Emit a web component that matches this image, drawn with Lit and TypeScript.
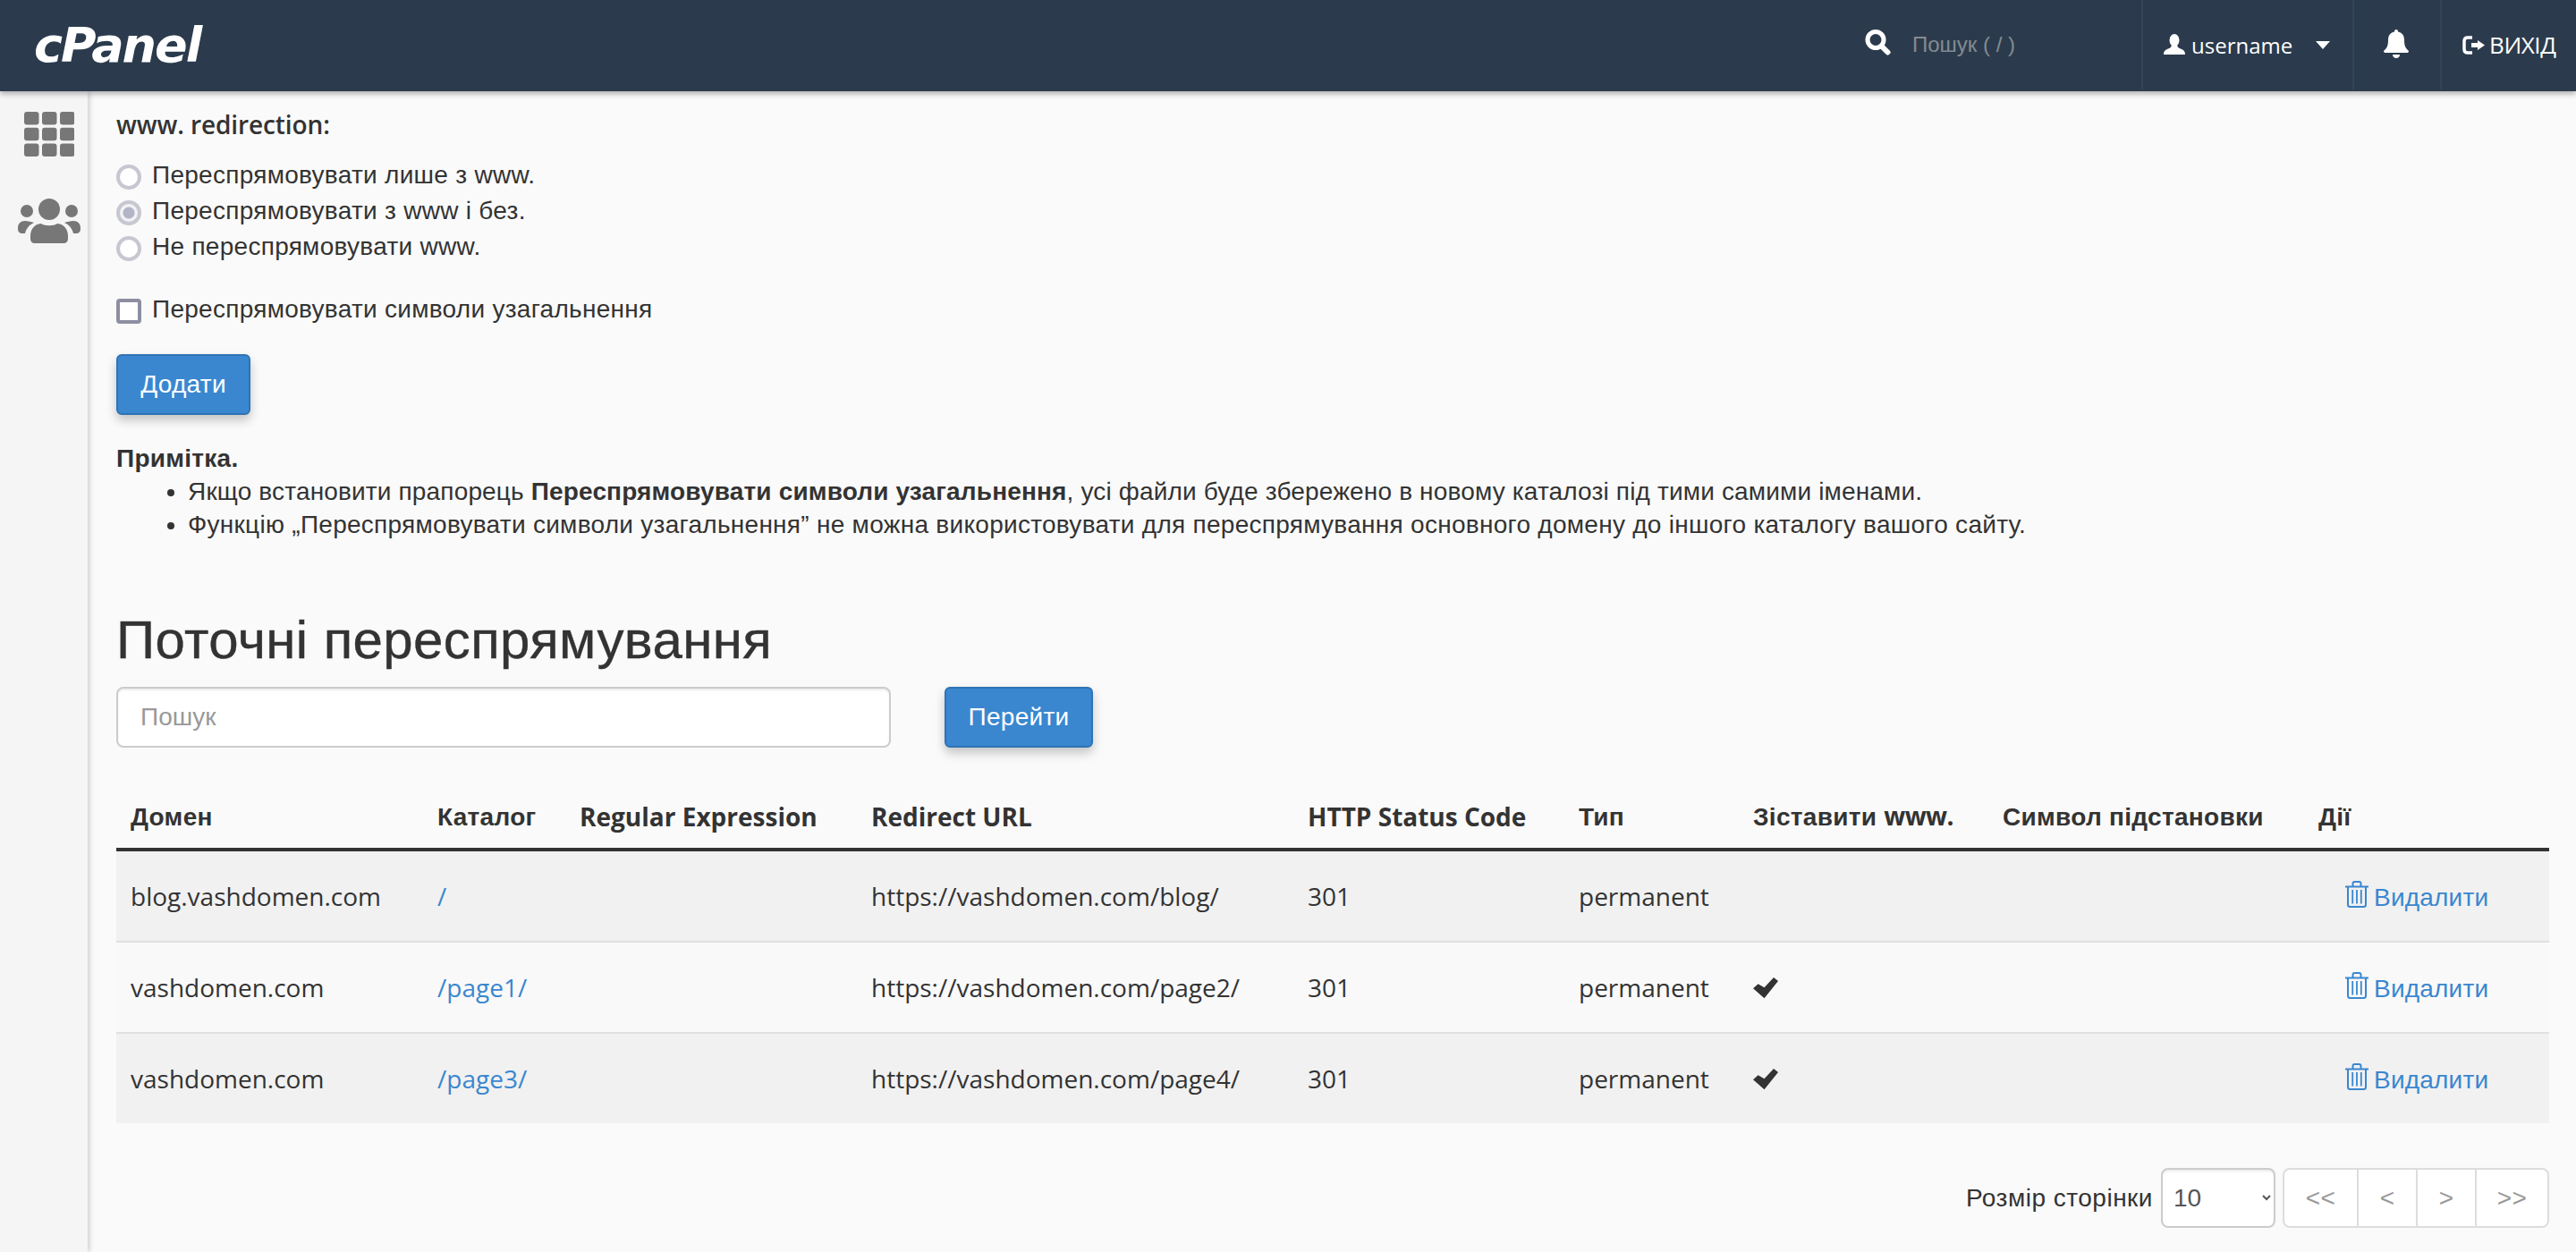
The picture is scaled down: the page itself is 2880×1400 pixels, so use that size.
import { LitElement, html, svg, css, nothing } from "lit";
import { customElement } from "lit/decorators.js";

const rows = [
  { domain: "blog.vashdomen.com", dir: "/", url: "https://vashdomen.com/blog/", www: false },
  { domain: "vashdomen.com", dir: "/page1/", url: "https://vashdomen.com/page2/", www: true },
  { domain: "vashdomen.com", dir: "/page3/", url: "https://vashdomen.com/page4/", www: true },
];

const trashIcon = html`<svg class="trash" viewBox="0 0 26 30" fill="none" stroke="currentColor" stroke-width="2">
  <path d="M0 6.5H26M8.5 6V3C8.5 1.800 9.300 1 10.500 1H15.500C16.700 1 17.500 1.800 17.500 3V6" />
  <path d="M3 7V26.500C3 28 4 29 5.500 29H20.500C22 29 23 28 23 26.500V7" />
  <path d="M8.200 10V25.500M13 10V25.500M17.800 10V25.500" stroke-width="1.800" />
</svg>`;

const checkIcon = html`<svg class="check" viewBox="0 0 28 24">
  <polygon points="0,12.300 5.600,7.300 12.500,11.300 23,0 28,4 12.500,23.300" fill="currentColor" />
</svg>`;

@customElement("app-root")
export class AppRoot extends LitElement {
  static styles = css`
    :host {
      display: block;
      height: 1400px;
      overflow: hidden;
      background: #fafafa;
      color: #333;
      font-family: "Liberation Sans", Arial, sans-serif;
      font-size: 28px;
      line-height: 37px;
      letter-spacing: 0.28px;
    }

    .topbar {
      position: relative;
      z-index: 2;
      display: flex;
      align-items: stretch;
      height: 102px;
      background: #2b3b4d;
      color: #fff;
      letter-spacing: 0;
      box-shadow: 0 3px 6px rgba(0, 0, 0, 0.3);
    }

    .logo {
      margin-left: 38px;
      align-self: center;
      font-family: "DejaVu Sans", sans-serif;
      font-size: 54px;
      font-weight: 700;
      font-style: italic;
      letter-spacing: -2px;
      line-height: 60px;
    }

    .spacer {
      flex: 1;
    }

    .search {
      display: flex;
      align-items: center;
      width: 311px;
      height: 100px;
    }

    .search svg {
      width: 32px;
      height: 30px;
      margin-top: -6px;
    }

    .search input {
      width: 240px;
      margin-left: 23px;
      padding: 0;
      border: 0;
      outline: 0;
      background: transparent;
      color: #fff;
      font: 24px "Liberation Sans", sans-serif;
    }

    .search input::placeholder {
      color: #858b91;
      opacity: 1;
    }

    .section {
      flex: none;
      display: flex;
      align-items: center;
      height: 100px;
      box-sizing: border-box;
      border-left: 2px solid #33445a;
    }

    .user {
      width: 236px;
      padding-left: 23px;
      font-family: "Open Sans", sans-serif;
      font-size: 24px;
    }

    .user svg {
      width: 24px;
      height: 23px;
      margin-right: 7px;
      margin-top: -2px;
    }

    .caret {
      margin-left: 26px;
      border-top: 9px solid #fff;
      border-left: 8px solid transparent;
      border-right: 8px solid transparent;
    }

    .bell {
      width: 98px;
      padding-left: 33px;
    }

    .bell svg {
      width: 28px;
      height: 32px;
      margin-top: -2px;
    }

    .logout {
      width: 152px;
      padding-left: 23px;
      font-family: "Open Sans", sans-serif;
      font-size: 26px;
      letter-spacing: -0.4px;
    }

    .logout svg {
      width: 25px;
      height: 21px;
      margin-right: 5px;
    }

    .body {
      display: flex;
      height: 1298px;
    }

    .sidebar {
      flex: none;
      display: flex;
      flex-direction: column;
      align-items: center;
      gap: 47px;
      box-sizing: border-box;
      width: 98px;
      padding: 23px 0 0 12px;
      background: #f5f5f5;
      box-shadow: 2px 0 6px rgba(0, 0, 0, 0.18);
    }

    .sidebar svg {
      display: block;
      flex: none;
      fill: #777;
    }

    .main {
      flex: 1;
      min-width: 0;
      padding: 17px 30px 0 32px;
    }

    .form-label {
      font-family: "Open Sans", sans-serif;
      font-weight: 600;
      line-height: 40px;
      letter-spacing: -0.1px;
    }

    .options {
      margin-top: 16px;
    }

    .option {
      display: flex;
      align-items: center;
      height: 40px;
    }

    .option input {
      appearance: none;
      flex: none;
      width: 28px;
      height: 28px;
      margin: 6px 12px 0 0;
      box-sizing: border-box;
      background: #fff;
      border: 4px solid #c6c7d1;
      border-radius: 50%;
    }

    .option input:checked {
      background: radial-gradient(circle, #b3b5c6 0 6px, #f2f2f5 7px);
    }

    .option input[type="checkbox"] {
      border-color: #8e8ea2;
      border-radius: 4px;
    }

    .wild {
      margin-top: 30px;
    }

    .btn {
      display: block;
      height: 68px;
      box-sizing: border-box;
      padding: 0;
      background: #3a87d0;
      border: 2px solid #2f73b5;
      border-radius: 6px;
      box-shadow: 0 6px 12px rgba(0, 0, 0, 0.22);
      color: #fff;
      font: 28px "Liberation Sans", sans-serif;
      letter-spacing: 0.28px;
    }

    .add {
      width: 150px;
      margin-top: 31px;
    }

    .note {
      margin-top: 30px;
    }

    .note ul {
      margin: 0;
      padding-left: 80px;
    }

    .note .tight {
      letter-spacing: 0.16px;
    }

    h2 {
      margin: 78px 0 0;
      font-size: 60px;
      font-weight: 400;
      line-height: 66px;
      letter-spacing: 0.4px;
      -webkit-text-stroke: 0.4px #333;
    }

    .filter {
      display: flex;
      gap: 60px;
      margin-top: 19px;
    }

    .filter input {
      width: 866px;
      height: 68px;
      box-sizing: border-box;
      padding: 0 25px;
      background: #fff;
      border: 2px solid #ccc;
      border-radius: 8px;
      box-shadow: inset 0 2px 2px rgba(0, 0, 0, 0.075);
      font: 28px "Liberation Sans", sans-serif;
    }

    .filter input::placeholder {
      color: #999;
      opacity: 1;
    }

    .go {
      width: 166px;
    }

    table {
      width: 2720px;
      margin-top: 42px;
      table-layout: fixed;
      border-collapse: separate;
      border-spacing: 0;
      font-family: "Open Sans", sans-serif;
      letter-spacing: 0;
    }

    .c1 { width: 343px; }
    .c2 { width: 159px; }
    .c3 { width: 326px; }
    .c4 { width: 488px; }
    .c5 { width: 303px; }
    .c6 { width: 195px; }
    .c7 { width: 279px; }
    .c8 { width: 353px; }
    .c9 { width: 274px; }

    th {
      height: 70px;
      padding: 0 16px;
      border-bottom: 4px solid #333;
      text-align: left;
      font-weight: 700;
      white-space: nowrap;
    }

    .cy {
      font-family: "Liberation Sans", sans-serif;
      letter-spacing: 0.3px;
    }

    .lat {
      font-family: "Open Sans", sans-serif;
      letter-spacing: -0.6px;
    }

    td {
      height: 100px;
      padding: 0 16px;
      border-bottom: 2px solid #e0e0e0;
      white-space: nowrap;
    }

    tr:nth-child(odd) td {
      background: #f1f1f1;
    }

    tr:nth-child(even) td {
      background: #f9f9f9;
    }

    tr:last-child td {
      border-bottom: 0;
    }

    a {
      color: #3a87d0;
      text-decoration: none;
    }

    .action {
      display: inline-flex;
      align-items: center;
      margin: 3px 0 0 30px;
      font-family: "Liberation Sans", sans-serif;
      letter-spacing: 0.2px;
    }

    .trash {
      width: 26px;
      height: 30px;
      margin: -7px 6px 0 0;
    }

    .check {
      display: block;
      width: 28px;
      height: 24px;
      margin-top: 1px;
      color: #333;
    }

    .pager {
      display: flex;
      justify-content: flex-end;
      align-items: center;
      margin-top: 50px;
    }

    .pager label {
      margin-right: 9px;
      letter-spacing: 0.5px;
    }

    .pager select {
      width: 128px;
      height: 67px;
      box-sizing: border-box;
      padding: 0 6px 0 8px;
      background: #fff;
      border: 2px solid #ccc;
      border-radius: 8px;
      box-shadow: inset 0 2px 2px rgba(0, 0, 0, 0.075);
      color: #555;
      font: 28px "Liberation Sans", sans-serif;
    }

    .pages {
      display: flex;
      height: 67px;
      margin-left: 8px;
      box-sizing: border-box;
      background: #fff;
      border: 2px solid #ddd;
      border-radius: 8px;
      color: #999;
    }

    .pages span {
      display: flex;
      align-items: center;
      justify-content: center;
      width: 66px;
      box-sizing: border-box;
      border-left: 2px solid #ddd;
    }

    .pages span:first-child,
    .pages span:last-child {
      width: 81px;
    }

    .pages span:first-child {
      border-left: 0;
    }
  `;

  protected render() {
    return html`
      <header class="topbar">
        <div class="logo">cPanel</div>
        <div class="spacer"></div>
        <div class="search">
          <svg viewBox="0 0 32 30" fill="none" stroke="#fff">
            <circle cx="14" cy="12.500" r="9" stroke-width="5" />
            <path d="M21 20L27.500 26.500" stroke-width="6" stroke-linecap="round" />
          </svg>
          <input placeholder="Пошук ( / )" />
        </div>
        <div class="section user">
          <svg viewBox="0 0 24 23" fill="#fff">
            <ellipse cx="12" cy="7" rx="5.500" ry="7" />
            <path d="M0 23C0 19 2 17.500 5 16.500C8 15.500 9 14 9 11H15C15 14 16 15.500 19 16.500C22 17.500 24 19 24 23Z" />
          </svg>
          <span>username</span>
          <i class="caret"></i>
        </div>
        <div class="section bell">
          <svg viewBox="0 0 28 32" fill="#fff">
            <path d="M14 0C12.500 0 12 1 12 2.500C7 3.500 5 7 5 12C5 18 3.500 21 0 24C0 25.500 1 26 2 26H26C27 26 28 25.500 28 24C24.500 21 23 18 23 12C23 7 21 3.500 16 2.500C16 1 15.500 0 14 0Z" />
            <path d="M10 28H18C18 30.500 16 32 14 32C12 32 10 30.500 10 28Z" />
          </svg>
        </div>
        <div class="section logout">
          <svg viewBox="0 0 25 21">
            <path d="M11 2H6C3.500 2 2 3.500 2 6V15C2 17.500 3.500 19 6 19H11" fill="none" stroke="#fff" stroke-width="3.500" />
            <path d="M10 8H17V5L25 10.500L17 16V13H10Z" fill="#fff" />
          </svg>
          <span>ВИХІД</span>
        </div>
      </header>

      <div class="body">
        <nav class="sidebar">
          <svg width="56" height="50" viewBox="0 0 56 50">
            ${[0, 17.7, 35.4].map((y) =>
              [0, 20, 40].map(
                (x) => svg`<rect x=${x} y=${y} width="16.500" height="14.600" rx="3" />`
              )
            )}
          </svg>
          <svg width="70" height="50" viewBox="0 0 70 50">
            <circle cx="35" cy="12" r="12" />
            <circle cx="10" cy="14" r="7" />
            <circle cx="60" cy="14" r="7" />
            <path d="M14 42C14 33 20 28 26 28C30 31 40 31 44 28C50 28 56 33 56 42V45C56 48 54 50 51 50H19C16 50 14 48 14 45Z" />
            <path d="M0 33C0 28 3 25 8 25C11 25 15 26 18 27C13 29 9 34 8 39H5C2 39 0 37 0 34Z" />
            <path d="M70 33C70 28 67 25 62 25C59 25 55 26 52 27C57 29 61 34 62 39H65C68 39 70 37 70 34Z" />
          </svg>
        </nav>

        <main class="main">
          <div class="form-label">www. redirection:</div>
          <div class="options">
            <label class="option"><input type="radio" name="www" />Переспрямовувати лише з www.</label>
            <label class="option"><input type="radio" name="www" checked />Переспрямовувати з www і без.</label>
            <label class="option"><input type="radio" name="www" />Не переспрямовувати www.</label>
          </div>
          <label class="option wild"><input type="checkbox" />Переспрямовувати символи узагальнення</label>
          <button class="btn add">Додати</button>

          <div class="note">
            <strong>Примітка.</strong>
            <ul>
              <li class="tight">Якщо встановити прапорець <strong>Переспрямовувати символи узагальнення</strong>, усі файли буде збережено в новому каталозі під тими самими іменами.</li>
              <li>Функцію „Переспрямовувати символи узагальнення” не можна використовувати для переспрямування основного домену до іншого каталогу вашого сайту.</li>
            </ul>
          </div>

          <h2>Поточні переспрямування</h2>
          <div class="filter">
            <input placeholder="Пошук" />
            <button class="btn go">Перейти</button>
          </div>

          <table>
            <colgroup>
              ${[1, 2, 3, 4, 5, 6, 7, 8, 9].map((n) => html`<col class="c${n}" />`)}
            </colgroup>
            <thead>
              <tr>
                <th class="cy">Домен</th>
                <th class="cy">Каталог</th>
                <th>Regular Expression</th>
                <th>Redirect URL</th>
                <th>HTTP Status Code</th>
                <th class="cy">Тип</th>
                <th class="cy">Зіставити <span class="lat">www.</span></th>
                <th class="cy">Символ підстановки</th>
                <th class="cy">Дії</th>
              </tr>
            </thead>
            <tbody>
              ${rows.map(
                (r) => html`<tr>
                  <td>${r.domain}</td>
                  <td><a href="#">${r.dir}</a></td>
                  <td></td>
                  <td>${r.url}</td>
                  <td>301</td>
                  <td>permanent</td>
                  <td>${r.www ? checkIcon : nothing}</td>
                  <td></td>
                  <td><a class="action" href="#">${trashIcon}Видалити</a></td>
                </tr>`
              )}
            </tbody>
          </table>

          <div class="pager">
            <label>Розмір сторінки</label>
            <select><option>10</option><option>20</option></select>
            <div class="pages">
              <span>&lt;&lt;</span><span>&lt;</span><span>&gt;</span><span>&gt;&gt;</span>
            </div>
          </div>
        </main>
      </div>
    `;
  }
}
